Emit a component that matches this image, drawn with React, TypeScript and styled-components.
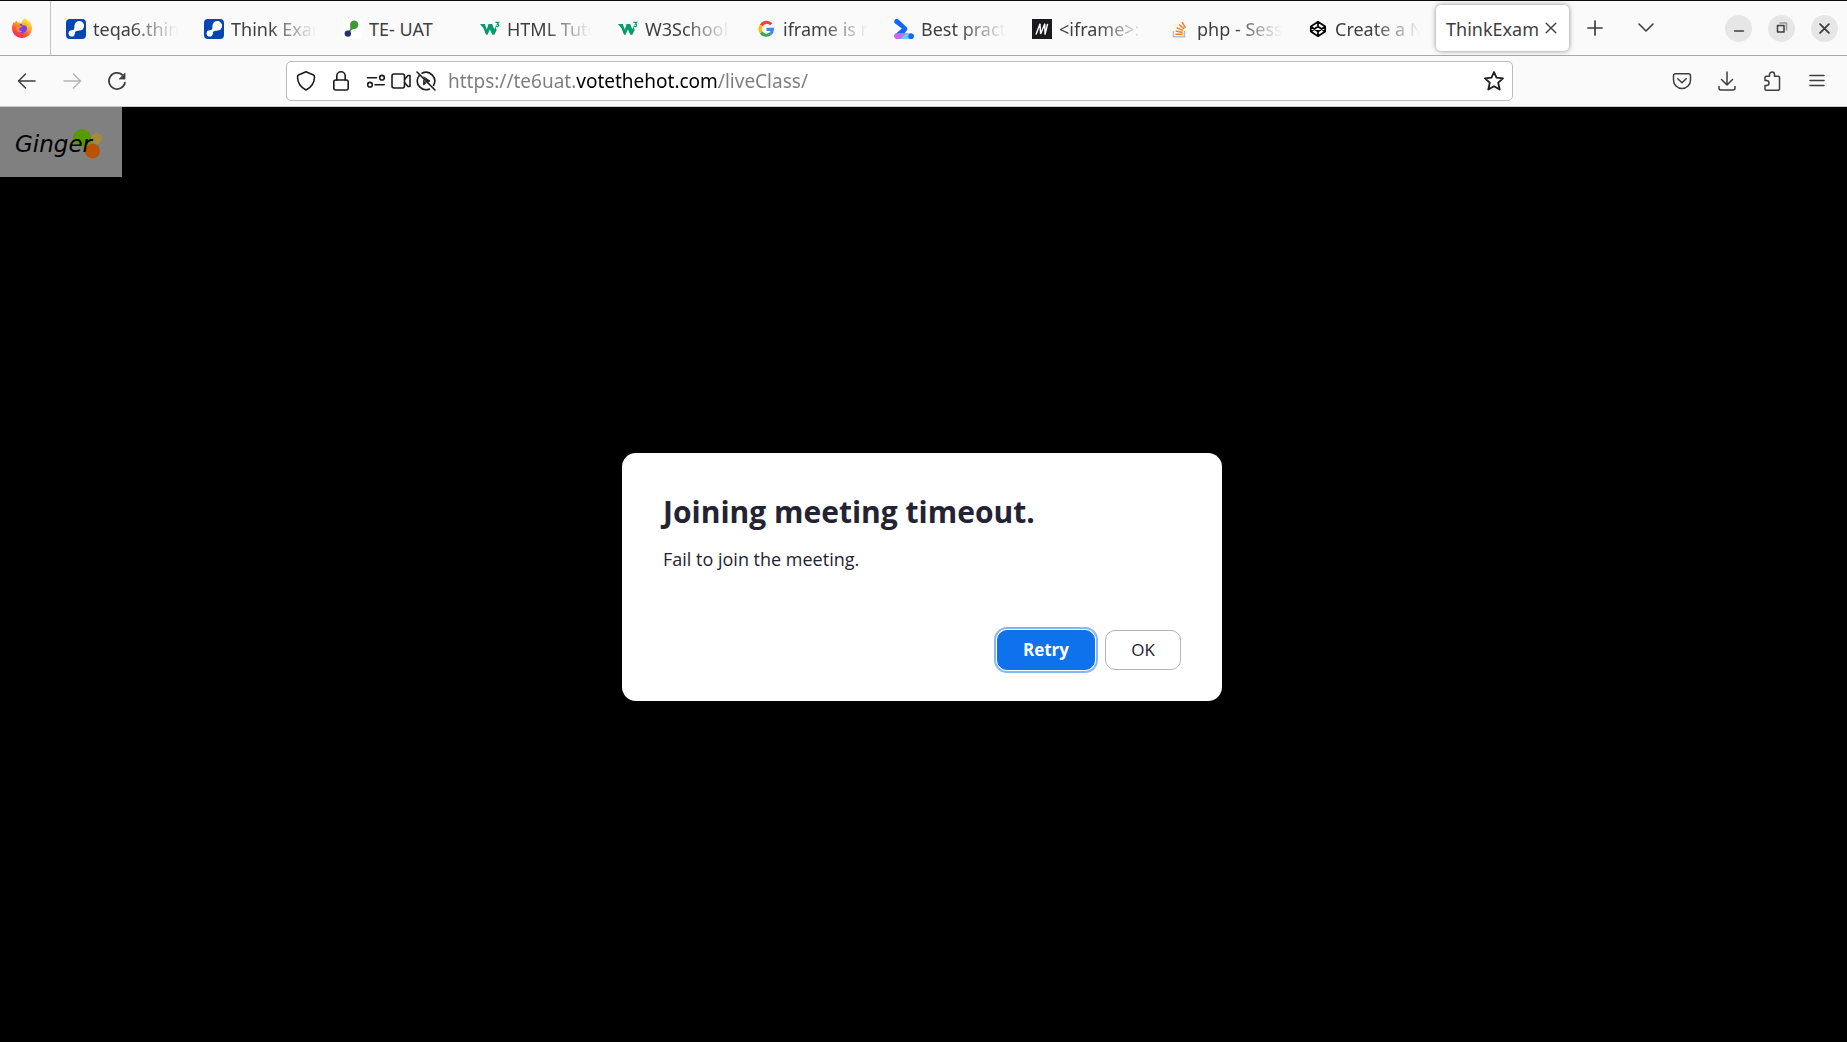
import React, { useState } from "react";
import styled, { createGlobalStyle, css } from "styled-components";

const GlobalStyle = createGlobalStyle`
  *, *::before, *::after { box-sizing: border-box; }
  html, body { margin: 0; height: 100%; }
  #root { height: 100%; }
  body { background: #000; font-family: "Noto Sans", sans-serif; }
  button, input { font: inherit; color: inherit; }
`;

const Window = styled.div`
  display: flex;
  flex-direction: column;
  min-height: 100%;
  border-top: 1px solid #0b0b0f;
`;

/* ---------- tab strip ---------- */

const TabStrip = styled.header`
  display: flex;
  align-items: center;
  height: 55px;
  background: #fafafa;
  border-bottom: 1px solid #a9a9ac;
  color: #3e3e42;
`;

const BrandButton = styled.button`
  display: flex;
  align-items: center;
  height: 100%;
  width: 51px;
  padding: 0 0 0 12px;
  border: 0;
  border-right: 1px solid #c4c4c6;
  background: none;
`;

const TabList = styled.div`
  display: flex;
  align-items: center;
  min-width: 0;
  padding-left: 5px;
`;

const TabButton = styled.button`
  display: flex;
  align-items: center;
  gap: 7px;
  flex: 0 1 138px;
  min-width: 0;
  width: 138px;
  height: 46px;
  padding: 2px 16px 0 10px;
  border: 0;
  border-radius: 5px;
  background: none;
  font-size: 18px;
  line-height: 24px;
  text-align: left;
  white-space: nowrap;
`;

const ActiveTab = styled.div`
  display: flex;
  align-items: center;
  justify-content: space-between;
  flex: 0 0 auto;
  width: 133px;
  height: 46px;
  padding: 0 12px 0 10px;
  border-radius: 5px;
  background: #fff;
  box-shadow: 0 0 5px rgba(0, 0, 0, 0.45);
`;

const ActiveTabLabel = styled.button`
  padding: 2px 0 0;
  border: 0;
  background: none;
  font-size: 18px;
  line-height: 24px;
`;

const TabLabel = styled.span`
  flex: 1;
  min-width: 0;
  overflow: hidden;
  mask-image: linear-gradient(to right, #000 45%, transparent 100%);
`;

const FullLabel = styled(TabLabel)`
  mask-image: none;
`;

const PlainButton = styled.button<{ $width: number; $faded?: boolean }>`
  display: flex;
  align-items: center;
  justify-content: center;
  flex: none;
  width: ${(p) => p.$width}px;
  height: 40px;
  padding: 0;
  border: 0;
  background: none;
  color: ${(p) => (p.$faded ? "#b4b4b6" : "#3e3e42")};
`;

const WindowControls = styled.div`
  display: flex;
  gap: 16px;
  margin-left: auto;
  padding-right: 9px;
`;

const WindowButton = styled.button`
  display: flex;
  align-items: center;
  justify-content: center;
  width: 27px;
  height: 27px;
  padding: 0;
  border: 0;
  border-radius: 50%;
  background: #e6e6e6;
`;

/* ---------- navigation bar ---------- */

const NavBar = styled.nav`
  display: flex;
  align-items: center;
  height: 51px;
  padding: 0 8px 0 4px;
  background: #fafafa;
  border-bottom: 1px solid #c8c8ca;
`;

const AddressBar = styled.div`
  display: flex;
  align-items: center;
  flex: 1;
  min-width: 0;
  height: 40px;
  margin: 0 146px 0 147px;
  padding: 0 8px 0 9px;
  border: 1px solid #bcbcbf;
  border-radius: 5px;
  background: #fff;
  color: #1c1c20;
`;

const SiteButton = styled.button<{ $gap: number }>`
  display: flex;
  flex: none;
  padding: 0;
  margin-right: ${(p) => p.$gap}px;
  border: 0;
  background: none;
`;

const hostHighlight = css`
  background: linear-gradient(to right, #7d7d80 128px, #000 128px, #000 271px, #7d7d80 271px);
  background-clip: text;
  -webkit-background-clip: text;
  -webkit-text-fill-color: transparent;
`;

const AddressInput = styled.input`
  flex: 1;
  min-width: 0;
  height: 30px;
  padding: 0;
  border: 0;
  outline: 0;
  font-size: 19px;
  line-height: 30px;
  ${hostHighlight}
`;

/* ---------- page ---------- */

const Page = styled.main`
  display: flex;
  flex-direction: column;
  flex: 1;
  position: relative;
  background: #000;
`;

const LogoBox = styled.div`
  width: 122px;
  height: 70px;
  background: #808080;
`;

const Overlay = styled.div`
  position: absolute;
  inset: 0;
  display: flex;
  align-items: center;
  justify-content: center;
  padding: 5px 3px 0 0;
`;

const Dialog = styled.section`
  width: 600px;
  padding: 40px 41px 31px;
  border-radius: 14px;
  background: #fff;
  color: #232333;
  font-family: "Open Sans", sans-serif;
`;

const DialogTitle = styled.h1`
  margin: 0;
  font-size: 30px;
  line-height: 38px;
  font-weight: 700;
`;

const DialogText = styled.p`
  margin: 16px 0 0;
  font-size: 18px;
  line-height: 24px;
`;

const DialogActions = styled.div`
  display: flex;
  justify-content: flex-end;
  gap: 10px;
  margin-top: 59px;
`;

const DialogButton = styled.button<{ $primary?: boolean }>`
  height: 40px;
  width: ${(p) => (p.$primary ? 98 : 76)}px;
  padding: 0;
  border: 1px solid ${(p) => (p.$primary ? "#0e72ed" : "#b4b4b8")};
  border-radius: 10px;
  background: ${(p) => (p.$primary ? "#0e72ed" : "#fff")};
  color: ${(p) => (p.$primary ? "#fff" : "#232333")};
  font-size: 17px;
  line-height: 24px;
  font-weight: ${(p) => (p.$primary ? 700 : 400)};
  box-shadow: ${(p) => (p.$primary ? "0 0 0 1px #fff, 0 0 0 3px #85b7f4" : "none")};
`;

/* ---------- drawings ---------- */

const Icon = ({ size = 20, sw = 1.5, children }: { size?: number; sw?: number; children: React.ReactNode }) => (
  <svg width={size} height={size} viewBox="0 0 20 20" fill="none" stroke="currentColor" strokeWidth={sw}
    strokeLinecap="round" strokeLinejoin="round" aria-hidden="true">{children}</svg>
);

const FavSvg = styled.svg`
  flex: none;
`;

const Fav = ({ children }: { children: React.ReactNode }) => (
  <FavSvg width="20" height="20" viewBox="0 0 20 20" aria-hidden="true">{children}</FavSvg>
);

const FirefoxLogo = () => (
  <svg width="20" height="20" viewBox="0 0 20 20" aria-hidden="true">
    <defs>
      <linearGradient id="fx" x1="0.8" y1="0" x2="0.2" y2="1">
        <stop offset="0" stopColor="#fff14f" />
        <stop offset="0.35" stopColor="#ffb02e" />
        <stop offset="0.65" stopColor="#ff5a36" />
        <stop offset="1" stopColor="#ef1d6b" />
      </linearGradient>
    </defs>
    <path d="M13 0c2 1.300 3 3 3.300 4.200.2-.7.300-1.300.200-1.900C18.800 4.200 20 7 20 10.300 20 15.800 15.500 20 10 20S0 15.700 0 10.300C0 7.700.8 5.300 2.200 3.400l.3 1.700C3 4.200 4 3 5 2.500c0 .9.200 1.500.7 2 1.500-.2 2.900 0 4 .5C10 3 11.300 1.200 13 0z" fill="url(#fx)" />
    <circle cx="10.300" cy="10.500" r="4.700" fill="#7543e3" />
    <path d="M4.800 7.600c2-.7 3.700-.4 5.500.9-1 1.200-3 .8-3 2.500 0 1.500 1.500 2.500 3.200 2.200-1.600 2-5.700 1-6.100-2.200-.1-1.200 0-2.300.4-3.400z" fill="#ff8a2b" />
    <path d="M9 5c2.500-.3 4.800 1 5.700 3.500-1.600-1.300-3-1.400-4.200-.8C10.400 6.500 10 5.600 9 5z" fill="#ffb52e" />
  </svg>
);

const ThinkFav = () => (
  <Fav>
    <rect width="20" height="20" rx="4" fill="#0546b3" />
    <circle cx="13.300" cy="6.800" r="4.800" fill="#fff" />
    <path d="M8.500 7c0 3.500-.8 4.200-2.800 4.500L8.700 14.500c.3-2.200 1.600-2.900 4.600-2.900z" fill="#fff" />
    <circle cx="5.700" cy="14.400" r="3.100" fill="#fff" />
  </Fav>
);

const UatFav = () => (
  <Fav>
    <rect width="20" height="20" fill="#fff" />
    <circle cx="12.200" cy="5.800" r="4.200" fill="#3f9a35" />
    <path d="M8.300 7c0 2 0 3-1 4.500 2-.5 3.200-.7 5-1.700z" fill="#3f9a35" />
    <path d="M8.700 10.800c-.3 1.500-.2 2-.7 3L5.500 12.300z" fill="#27306b" />
    <circle cx="5.800" cy="14.600" r="3.200" fill="#27306b" />
  </Fav>
);

const W3Fav = () => (
  <Fav>
    <path d="M0 5h4.800l2 5.500L8.500 5h3.700l2 5.200 1.200-2.400 1.300 3.200-2.400 4.800h-1.900l-2.600-5.300-2.300 5.300H6L3.600 9.500z" fill="#059b6a" />
    <path d="M15.500 3.400h3.300l-1.500 1.700c1.800 0 1.900 2.500 0 2.500-.8 0-1.300-.2-1.700-.7" fill="none" stroke="#059b6a" strokeWidth="1.100" />
  </Fav>
);

const GoogleFav = () => (
  <Fav>
    <g fill="none" strokeWidth="3.100">
      <path d="M15.300 5.300A6.300 6.300 0 0 0 5.200 6.500" stroke="#ea4335" />
      <path d="M5.200 6.500a6.300 6.300 0 0 0 0 7" stroke="#fbbc05" />
      <path d="M5.200 13.500a6.300 6.300 0 0 0 9.200 1.300" stroke="#34a853" />
      <path d="M14.400 14.800a6 6 0 0 0 2-4.400H10.500" stroke="#4285f4" />
    </g>
  </Fav>
);

const ArrowFav = () => (
  <Fav>
    <path d="M2 0c1.400-.4 2 .1 3 1l7 6.500c1.800 1.700 1.800 3.300 0 5L10 15H1.500L7.800 9.600 1.200 4.600C-.6 3 .2.5 2 0z" fill="#1068fb" />
    <path d="M6 14h12v6H3z" fill="#6cc7ff" />
    <path d="M6.200 14H12l-5 5.200C4 21.500 0 20 0 17c0-1.300.8-2 1.600-2.400z" fill="#c66bf0" />
    <circle cx="17.200" cy="17.200" r="2.800" fill="#1068fb" />
  </Fav>
);

const MdnFav = () => (
  <Fav>
    <rect width="20" height="20" fill="#1b1b1f" />
    <path d="M4 15.500L8 4.800l.6 10.200L12.800 4.800l.2 10.700L15.600 4.800" fill="none" stroke="#fff" strokeWidth="1.400" strokeLinejoin="bevel" />
  </Fav>
);

const StackFav = () => (
  <Fav>
    <path d="M3.500 12v5.700h11V12" fill="none" stroke="#bcbbbb" strokeWidth="1.500" />
    <path d="M5.500 15.200h7M5.700 12l6.900 1.400M6.700 8.600l6.300 3M9 5.500l5.200 4.400M12.200 3.200l3.200 5.800" fill="none" stroke="#f48024" strokeWidth="1.500" />
  </Fav>
);

const CodepenFav = () => (
  <Fav>
    <path d="M10 2.800l7.200 4.700v5L10 17.200l-7.200-4.700v-5zM10 2.800v4.700M10 12.500v4.700M2.800 7.500L10 12.500l7.200-5M2.800 12.500L10 7.500l7.200 5" fill="none" stroke="#000" strokeWidth="1.700" strokeLinejoin="round" />
  </Fav>
);

const GingerLogo = () => (
  <svg width="122" height="70" viewBox="0 0 122 70" role="img" aria-label="Ginger">
    <circle cx="82" cy="31" r="9" fill="#569a00" />
    <circle cx="96.500" cy="31.500" r="5.500" fill="#a8893c" />
    <circle cx="92.500" cy="44" r="7.500" fill="#b85400" />
    <text x="15" y="45" fontFamily='"DejaVu Sans", sans-serif' fontStyle="italic" fontSize="23" fill="#000">Ginger</text>
  </svg>
);

const Close = ({ size = 12, sw = 1.6 }) => (
  <Icon size={size} sw={(sw * 20) / size}><path d="M2 2l16 16M18 2L2 18" /></Icon>
);

const tabs = [
  { label: "teqa6.thin", icon: <ThinkFav /> },
  { label: "Think Exam", icon: <ThinkFav /> },
  { label: "TE- UAT", icon: <UatFav />, full: true },
  { label: "HTML Tuto", icon: <W3Fav /> },
  { label: "W3Schools", icon: <W3Fav /> },
  { label: "iframe is n", icon: <GoogleFav /> },
  { label: "Best pract", icon: <ArrowFav /> },
  { label: "<iframe>:", icon: <MdnFav /> },
  { label: "php - Sessi", icon: <StackFav /> },
  { label: "Create a N", icon: <CodepenFav /> },
];

export default function App() {
  const [url, setUrl] = useState("https://te6uat.votethehot.com/liveClass/");
  return (
    <>
      <GlobalStyle />
      <Window>
        <TabStrip>
          <BrandButton aria-label="Firefox"><FirefoxLogo /></BrandButton>
          <TabList>
            {tabs.map((t, i) => (
              <TabButton key={i}>
                {t.icon}
                {t.full ? <FullLabel>{t.label}</FullLabel> : <TabLabel>{t.label}</TabLabel>}
              </TabButton>
            ))}
            <ActiveTab>
              <ActiveTabLabel>ThinkExam</ActiveTabLabel>
              <PlainButton $width={12} aria-label="Close tab"><Close size={12} sw={1.4} /></PlainButton>
            </ActiveTab>
          </TabList>
          <PlainButton $width={52} aria-label="New tab"><Icon sw={1.7}><path d="M10 3v14M3 10h14" /></Icon></PlainButton>
          <PlainButton $width={50} aria-label="List all tabs"><Icon sw={1.6}><path d="M3 6l7 7 7-7" /></Icon></PlainButton>
          <WindowControls>
            <WindowButton aria-label="Minimize"><Icon sw={1.4}><path d="M5.500 13h9" /></Icon></WindowButton>
            <WindowButton aria-label="Restore">
              <Icon sw={1.5}><path d="M5.500 7.500h6.500v6.500H5.500z" /><path d="M8 5h6.500v7" stroke="#98989a" /></Icon>
            </WindowButton>
            <WindowButton aria-label="Close"><Close size={11} sw={1.8} /></WindowButton>
          </WindowControls>
        </TabStrip>

        <NavBar>
          <PlainButton $width={45} aria-label="Back"><Icon><path d="M18 10H2M8.500 3L1.500 10l7 7" /></Icon></PlainButton>
          <PlainButton $width={45} $faded aria-label="Forward"><Icon><path d="M2 10h16M11.500 3l7 7-7 7" /></Icon></PlainButton>
          <PlainButton $width={45} aria-label="Reload">
            <Icon sw={1.7}><path d="M18 11.500A8.100 8.100 0 1 1 15.500 4" /><path d="M18 2.500V8h-5.500z" fill="currentColor" strokeWidth="0.800" /></Icon>
          </PlainButton>
          <AddressBar>
            <SiteButton $gap={15} aria-label="Tracking protection">
              <Icon sw={1.6}><path d="M10 .8L17.500 4c.9.400 1 .9 1 2-.1 6-3.500 10.500-8.500 13-5-2.500-8.400-7-8.500-13 0-1.100.1-1.600 1-2z" /></Icon>
            </SiteButton>
            <SiteButton $gap={15} aria-label="Connection secure">
              <Icon sw={1.6}><rect x="2.800" y="9" width="14.400" height="10" rx="2" /><path d="M5.800 9V5a4.200 4.200 0 0 1 8.400 0v4" /></Icon>
            </SiteButton>
            <SiteButton $gap={5} aria-label="Permissions">
              <Icon sw={1.6}><circle cx="4" cy="13.700" r="2.300" /><path d="M9 13.700h9.200M1.500 6.700h9" /><circle cx="16" cy="6.700" r="2.300" /></Icon>
            </SiteButton>
            <SiteButton $gap={5} aria-label="Camera allowed">
              <Icon sw={1.6}><rect x="1" y="3" width="12.500" height="14" rx="2" /><path d="M13.500 8.500L17 4.500h2v11h-2l-3.500-4" /></Icon>
            </SiteButton>
            <SiteButton $gap={12} aria-label="Autoplay blocked">
              <Icon sw={1.600}><path d="M6 2.200A8.800 8.800 0 0 1 17.500 14.500M13.500 18A8.800 8.800 0 0 1 2 6.500M1 1l18 18M3.800 3.800l-1.200 1.800" /><path d="M8 6l6 4-2 1.300zM7.500 9.500v4.500l2.500-2z" fill="currentColor" strokeWidth="0.800" /></Icon>
            </SiteButton>
            <AddressInput aria-label="Address" value={url} onChange={(e) => setUrl(e.target.value)} spellCheck={false} />
            <SiteButton $gap={0} aria-label="Bookmark this page">
              <Icon sw={1.800}><path d="M10 1l2.500 5.700 6.500.7-4.800 4.300 1.500 6.800L10 15.200l-5.700 3.300 1.500-6.800L1 7.400l6.500-.7z" /></Icon>
            </SiteButton>
          </AddressBar>
          <PlainButton $width={45} aria-label="Pocket">
            <Icon><path d="M3.500 2.800h13c1.200 0 2 .8 2 2V9a8.500 8.500 0 0 1-17 0V4.800c0-1.200.8-2 2-2z" /><path d="M5.800 7.800L10 11.800l4.200-4" /></Icon>
          </PlainButton>
          <PlainButton $width={45} aria-label="Downloads">
            <Icon><path d="M10 1v13M4.500 8.500L10 14l5.500-5.500M2 15.500v1.500a2 2 0 0 0 2 2h12a2 2 0 0 0 2-2v-1.500" /></Icon>
          </PlainButton>
          <PlainButton $width={45} aria-label="Extensions">
            <Icon><path d="M3 9.500V6.500c0-.8.500-1.300 1.300-1.300H7.500V3.500a2.500 2.500 0 0 1 5 0v1.700h3.700c.8 0 1.300.5 1.300 1.300V18c0 .8-.5 1.300-1.300 1.300H4.300c-.8 0-1.300-.5-1.300-1.300v-3.500h1.500a2.500 2.500 0 0 0 0-5z" /></Icon>
          </PlainButton>
          <PlainButton $width={45} aria-label="Menu"><Icon sw={1.6}><path d="M3 4.500h14M3 9.500h14M3 14.500h14" /></Icon></PlainButton>
        </NavBar>

        <Page>
          <LogoBox><GingerLogo /></LogoBox>
          <Overlay>
            <Dialog role="dialog" aria-labelledby="dialog-title" aria-describedby="dialog-text">
              <DialogTitle id="dialog-title">Joining meeting timeout.</DialogTitle>
              <DialogText id="dialog-text">Fail to join the meeting.</DialogText>
              <DialogActions>
                <DialogButton $primary>Retry</DialogButton>
                <DialogButton>OK</DialogButton>
              </DialogActions>
            </Dialog>
          </Overlay>
        </Page>
      </Window>
    </>
  );
}
